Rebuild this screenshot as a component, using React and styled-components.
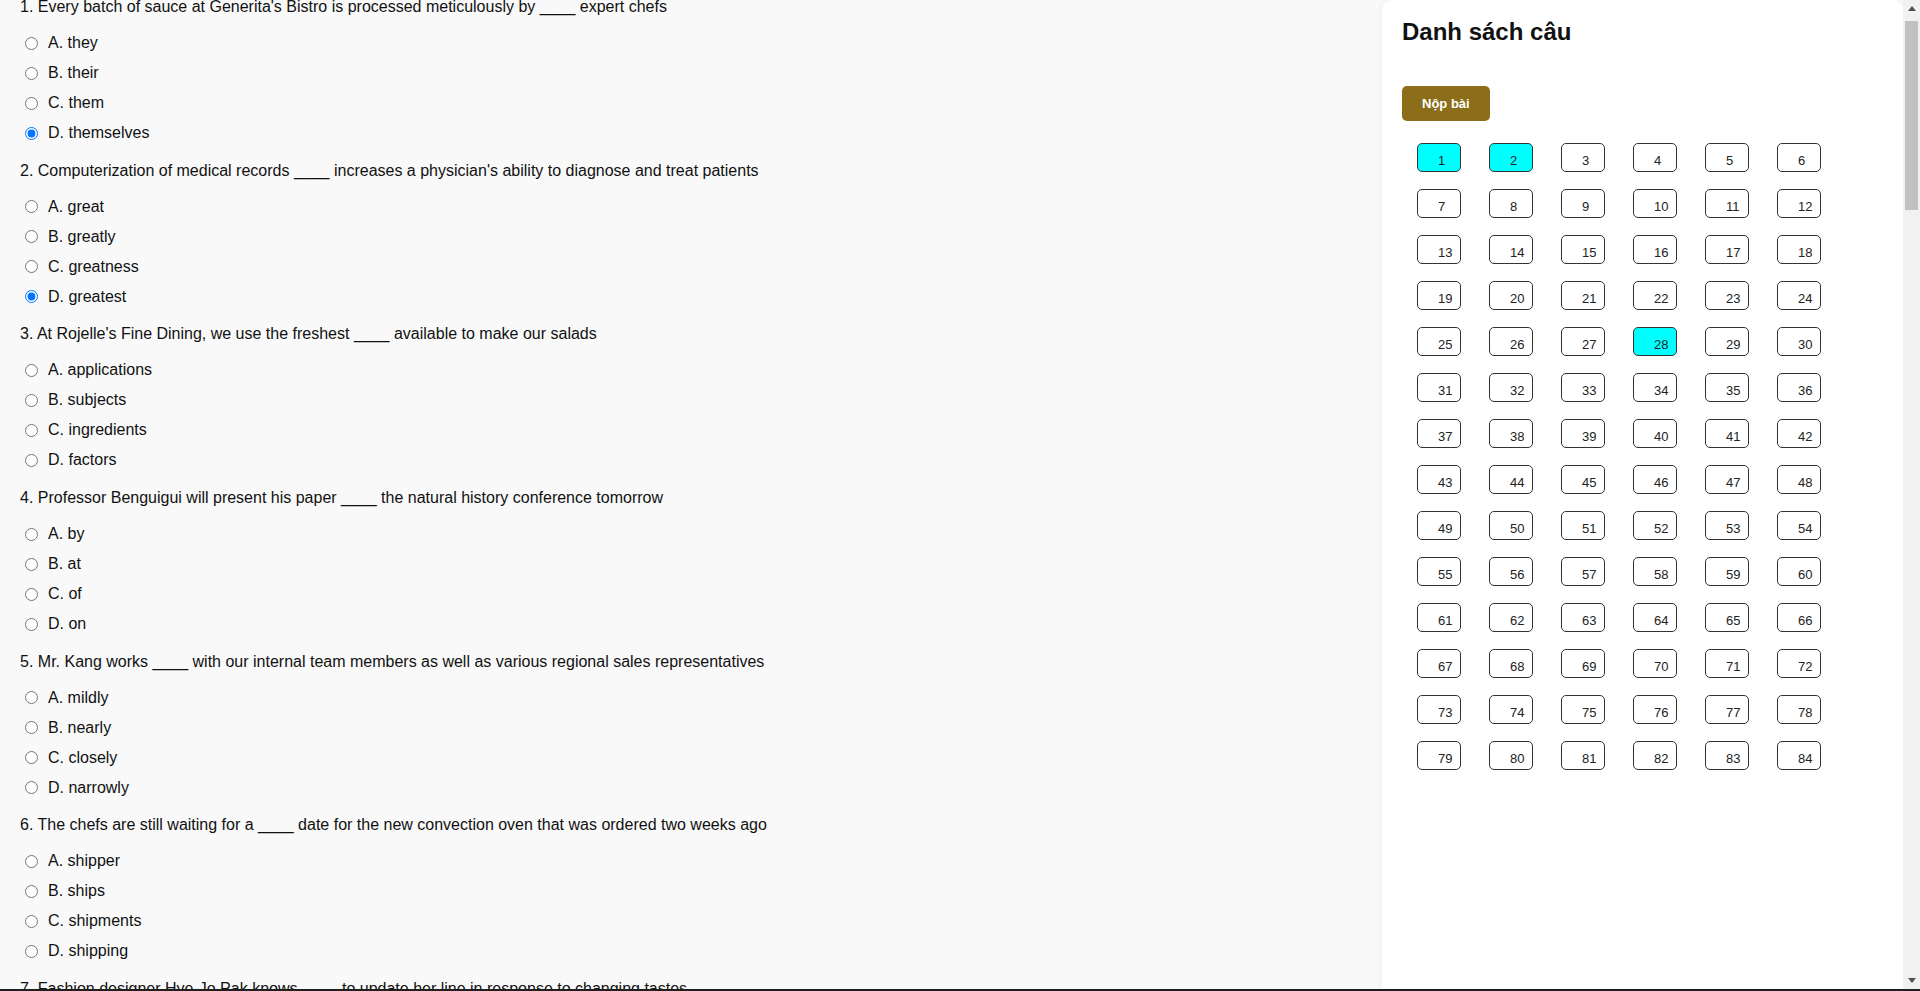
import React from 'react'
import styled, { createGlobalStyle } from 'styled-components'

// ────────────────────────────────────────────────────────────────────────────────
// Data
// ────────────────────────────────────────────────────────────────────────────────
const QUESTIONS = [
  {
    text: "Every batch of sauce at Generita's Bistro is processed meticulously by ____ expert chefs",
    options: ['they', 'their', 'them', 'themselves'],
    picked: 3,
  },
  {
    text: "Computerization of medical records ____ increases a physician's ability to diagnose and treat patients",
    options: ['great', 'greatly', 'greatness', 'greatest'],
    picked: 3,
  },
  {
    text: "At Rojelle's Fine Dining, we use the freshest ____ available to make our salads",
    options: ['applications', 'subjects', 'ingredients', 'factors'],
  },
  {
    text: 'Professor Benguigui will present his paper ____ the natural history conference tomorrow',
    options: ['by', 'at', 'of', 'on'],
  },
  {
    text: 'Mr. Kang works ____ with our internal team members as well as various regional sales representatives',
    options: ['mildly', 'nearly', 'closely', 'narrowly'],
  },
  {
    text: 'The chefs are still waiting for a ____ date for the new convection oven that was ordered two weeks ago',
    options: ['shipper', 'ships', 'shipments', 'shipping'],
  },
  {
    text: 'Fashion designer Hye-Jo Pak knows ____ to update her line in response to changing tastes',
    options: ['when', 'how', 'what', 'whether'],
  },
]

const LETTERS = ['A', 'B', 'C', 'D']
const TOTAL = 84
const ANSWERED = [1, 2, 28]

// ────────────────────────────────────────────────────────────────────────────────
// Global + page frame
// ────────────────────────────────────────────────────────────────────────────────
const GlobalStyle = createGlobalStyle`
  html, body {
    margin: 0;
    padding: 0;
    height: 100%;
    overflow: hidden;
    background: #f9f9f9;
  }
  body {
    font-family: "Liberation Sans", Arial, sans-serif;
    color: #111;
  }
`

const Page = styled.div`
  height: 100vh;
  display: flex;
  flex-direction: column;
`

const Viewport = styled.div`
  flex: 1;
  min-height: 0;
  display: flex;
  overflow: hidden;
`

const BottomBar = styled.div`
  height: 2px;
  background: #1f1f1f;
`

// ────────────────────────────────────────────────────────────────────────────────
// Quiz column
// ────────────────────────────────────────────────────────────────────────────────
const QuizColumn = styled.div`
  flex: 1;
  min-width: 0;
  padding: 0 20px;
  margin-top: -2px;
`

const QuestionBlock = styled.div`
  margin-bottom: 13.6px;
`

const QuestionText = styled.div`
  font-size: 16px;
  line-height: 18.4px;
  margin-bottom: 11.7px;
  white-space: nowrap;
`

const Option = styled.label`
  display: flex;
  align-items: center;
  height: 30px;
  font-size: 16px;
  line-height: 18.4px;
  color: #111;

  input {
    width: 13px;
    height: 13px;
    margin: 0 10px 0 5px;
  }
`

// ────────────────────────────────────────────────────────────────────────────────
// Sidebar card
// ────────────────────────────────────────────────────────────────────────────────
const Sidebar = styled.aside`
  width: 521px;
  flex-shrink: 0;
  box-sizing: border-box;
  background: #fff;
  border-radius: 10px 10px 0 0;
  box-shadow: 0 0 8px rgba(0, 0, 0, 0.06);
  padding: 18px 20px;
`

const Title = styled.h2`
  margin: 0;
  font-size: 24px;
  line-height: 27.6px;
  font-weight: 700;
  color: #111;
`

const SubmitButton = styled.button`
  margin-top: 40px;
  height: 35px;
  padding: 0 20px;
  border: none;
  border-radius: 5px;
  background: #8b6d1a;
  color: #fff;
  font-family: "Liberation Sans", Arial, sans-serif;
  font-size: 13px;
  font-weight: 700;
  cursor: pointer;
`

const Grid = styled.div`
  margin-top: 22px;
  padding-left: 15px;
  display: grid;
  grid-template-columns: repeat(6, 44px);
  column-gap: 28px;
  row-gap: 17px;
`

const Cell = styled.button`
  width: 44px;
  height: 29px;
  box-sizing: border-box;
  display: flex;
  align-items: center;
  justify-content: flex-start;
  padding: 7px 0 0 20px;
  border: 1px solid #333;
  border-radius: 5px;
  background: ${(p) => (p.$done ? '#00ffff' : '#fff')};
  color: #222;
  font-family: "Liberation Sans", Arial, sans-serif;
  font-size: 13px;
  line-height: 15px;
  white-space: nowrap;
  cursor: pointer;
`

// ────────────────────────────────────────────────────────────────────────────────
// Fake window scrollbar
// ────────────────────────────────────────────────────────────────────────────────
const ScrollBar = styled.div`
  width: 17px;
  flex-shrink: 0;
  background: #f1f1f1;
  display: flex;
  flex-direction: column;
`

const ArrowButton = styled.div`
  height: 17px;
  display: flex;
  align-items: center;
  justify-content: center;
  flex-shrink: 0;
`

const Track = styled.div`
  flex: 1;
  padding: 4px 2px 0;
`

const Thumb = styled.div`
  height: 189px;
  background: #c1c1c1;
`

const Arrow = ({ down }) => (
  <svg width="8" height="5" viewBox="0 0 8 5">
    <path d={down ? 'M0 0 H8 L4 5 Z' : 'M0 5 H8 L4 0 Z'} fill="#505050" />
  </svg>
)

// ────────────────────────────────────────────────────────────────────────────────
// App
// ────────────────────────────────────────────────────────────────────────────────
export default function App() {
  return (
    <Page>
      <GlobalStyle />
      <Viewport>
        <QuizColumn>
          {QUESTIONS.map((q, qi) => (
            <QuestionBlock key={qi}>
              <QuestionText>
                {qi + 1}. {q.text}
              </QuestionText>
              {q.options.map((opt, oi) => (
                <Option key={oi}>
                  <input type="radio" name={`q${qi}`} defaultChecked={q.picked === oi} />
                  {LETTERS[oi]}. {opt}
                </Option>
              ))}
            </QuestionBlock>
          ))}
        </QuizColumn>

        <Sidebar>
          <Title>Danh sách câu</Title>
          <SubmitButton>Nộp bài</SubmitButton>
          <Grid>
            {Array.from({ length: TOTAL }, (_, i) => (
              <Cell key={i} $done={ANSWERED.includes(i + 1)}>
                {i + 1}
              </Cell>
            ))}
          </Grid>
        </Sidebar>

        <ScrollBar>
          <ArrowButton>
            <Arrow />
          </ArrowButton>
          <Track>
            <Thumb />
          </Track>
          <ArrowButton>
            <Arrow down />
          </ArrowButton>
        </ScrollBar>
      </Viewport>
      <BottomBar />
    </Page>
  )
}
